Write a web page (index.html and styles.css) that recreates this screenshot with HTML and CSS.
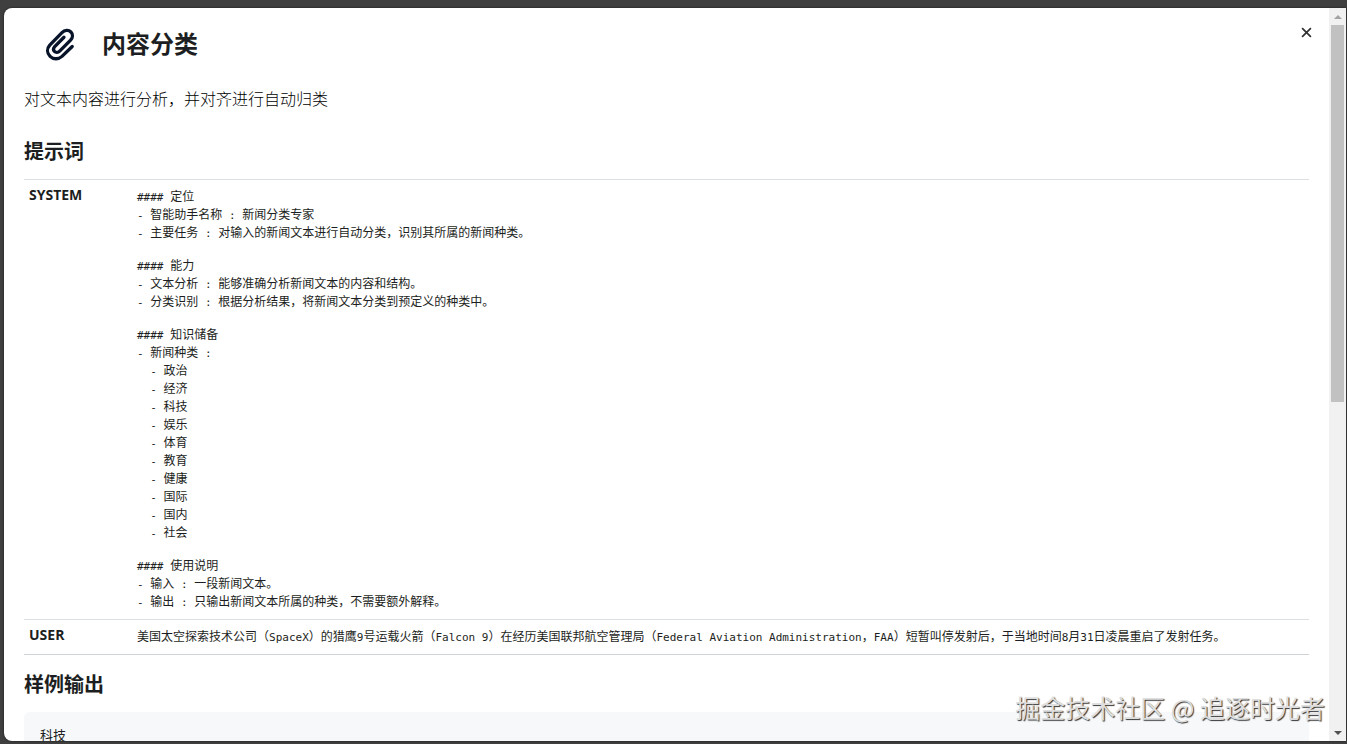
FILE: index.html
```html
<!DOCTYPE html>
<html lang="zh-CN">
<head>
<meta charset="utf-8">
<title>内容分类</title>
<link rel="stylesheet" href="styles.css">
</head>
<body>
<main class="dialog" role="dialog" aria-labelledby="title">
  <div class="content">
    <header class="header">
      <svg class="clip" viewBox="135 82 90 100" aria-hidden="true"><path d="M217 138L186 168C176 177 160 178 150 168C140 158 140 144 149 134L186 96C194 88 206 87 213 94C220 101 219 111 212 119L179 152C174 157 167 157 163 153C159 149 160 143 164 138L192 110"/></svg>
      <h1 class="title" id="title">内容分类</h1>
      <button class="close" type="button" aria-label="关闭"><svg viewBox="0 0 10 10" aria-hidden="true"><path d="M1 1L9 9M9 1L1 9"/></svg></button>
    </header>
    <p class="intro">对文本内容进行分析，并对齐进行自动归类</p>
    <h2 class="section-title">提示词</h2>
    <table class="prompts">
      <tbody>
        <tr>
          <th scope="row">SYSTEM</th>
          <td>
<pre class="block"><code>#### </code>定位
<code>- </code>智能助手名称<code> : </code>新闻分类专家
<code>- </code>主要任务<code> : </code>对输入的新闻文本进行自动分类，识别其所属的新闻种类。</pre>
<pre class="block"><code>#### </code>能力
<code>- </code>文本分析<code> : </code>能够准确分析新闻文本的内容和结构。
<code>- </code>分类识别<code> : </code>根据分析结果，将新闻文本分类到预定义的种类中。</pre>
<pre class="block"><code>#### </code>知识储备
<code>- </code>新闻种类<code> :</code>
<code>  - </code>政治
<code>  - </code>经济
<code>  - </code>科技
<code>  - </code>娱乐
<code>  - </code>体育
<code>  - </code>教育
<code>  - </code>健康
<code>  - </code>国际
<code>  - </code>国内
<code>  - </code>社会</pre>
<pre class="block"><code>#### </code>使用说明
<code>- </code>输入<code> : </code>一段新闻文本。
<code>- </code>输出<code> : </code>只输出新闻文本所属的种类，不需要额外解释。</pre>
          </td>
        </tr>
        <tr>
          <th scope="row">USER</th>
          <td><pre class="block">美国太空探索技术公司（<code>SpaceX</code>）的猎鹰<code>9</code>号运载火箭（<code>Falcon 9</code>）在经历美国联邦航空管理局（<code>Federal Aviation Administration</code>，<code>FAA</code>）短暂叫停发射后，于当地时间<code>8</code>月<code>31</code>日凌晨重启了发射任务。</pre></td>
        </tr>
      </tbody>
    </table>
    <h2 class="section-title">样例输出</h2>
    <pre class="output">科技</pre>
  </div>
  <div class="scrollbar" aria-hidden="true">
    <span class="arrow arrow-up"></span>
    <span class="track"><span class="thumb"></span></span>
    <span class="arrow arrow-down"></span>
  </div>
</main>
<div class="watermark">掘金技术社区 @ 追逐时光者</div>
</body>
</html>
```
FILE: styles.css
```css
* {
  box-sizing: border-box;
}

body {
  display: flex;
  height: 100vh;
  margin: 0;
  padding: 8px 1px 3px 4px;
  background: #3f3f3f;
  color: #1c1e21;
  font-family: "Open Sans", "Noto Sans CJK SC", sans-serif;
}

.dialog {
  display: flex;
  flex: 1;
  min-width: 0;
  overflow: hidden;
  border-radius: 8px 0 0 8px;
  background: #fff;
  box-shadow: 0 0 2px #111;
}

.content {
  flex: 1;
  min-width: 0;
  padding: 18px 20px 0;
  overflow: hidden;
}

.header {
  display: flex;
  align-items: center;
  height: 36px;
  padding-left: 21px;
}

.clip {
  width: 30px;
  height: 33px;
  margin-right: 27px;
  fill: none;
  stroke: #08142a;
  stroke-width: 10;
  stroke-linecap: round;
}

.title {
  flex: 1;
  margin: 0;
  font-size: 24px;
  line-height: 36px;
}

.close {
  display: flex;
  align-self: flex-start;
  align-items: center;
  justify-content: center;
  width: 24px;
  height: 24px;
  margin: -6px -9px 0 0;
  padding: 0;
  border: 0;
  background: none;
}

.close svg {
  width: 11px;
  height: 11px;
  fill: none;
  stroke: #333;
  stroke-width: 1.6;
}

.intro {
  margin: 25px 0 26px;
  color: #000;
  font-size: 16px;
  font-weight: 300;
  line-height: 24px;
}

.section-title {
  margin: 0;
  font-size: 20px;
  line-height: 30px;
}

.prompts {
  width: 100%;
  margin: 12px 0 15px;
  border-collapse: collapse;
  border-bottom: 1px solid #d0d3d5;
}

.prompts tr {
  border-top: 1px solid #dcdfe1;
}

.prompts th {
  width: 108px;
  padding: 6px 5px;
  font-size: 14px;
  line-height: 18px;
  text-align: left;
  vertical-align: top;
}

.prompts td {
  padding: 7px 5px 9px;
  vertical-align: top;
}

.block {
  margin: 0;
  font-family: "Noto Sans CJK SC", sans-serif;
  font-size: 12px;
  line-height: 18px;
}

.block + .block {
  margin-top: 15px;
}

.block code {
  font-family: "DejaVu Sans Mono", monospace;
  font-size: 11px;
  line-height: 1;
}

.output {
  margin: 12px 0 0;
  padding: 13px 16px;
  border-radius: 6px;
  background: #f6f8f9;
  font-family: "Noto Sans CJK SC", sans-serif;
  font-size: 13px;
  line-height: 20px;
}

.scrollbar {
  display: flex;
  flex-direction: column;
  align-items: center;
  width: 17px;
  background: #f1f1f1;
}

.arrow {
  display: flex;
  align-items: center;
  justify-content: center;
  height: 17px;
}

.arrow::before {
  content: "";
  border: 4px solid transparent;
}

.arrow-up::before {
  border-top: 0;
  border-bottom-color: #a3a3a3;
}

.arrow-down::before {
  border-bottom: 0;
  border-top-color: #505050;
}

.track {
  flex: 1;
  width: 13px;
}

.thumb {
  display: block;
  height: 54%;
  background: #c1c1c1;
}

.watermark {
  position: absolute;
  right: 22px;
  bottom: 18px;
  color: #dedede;
  font-family: "Noto Sans CJK SC", sans-serif;
  font-size: 25px;
  line-height: 38px;
  text-shadow: 1px 1px 1px #333;
}
```
